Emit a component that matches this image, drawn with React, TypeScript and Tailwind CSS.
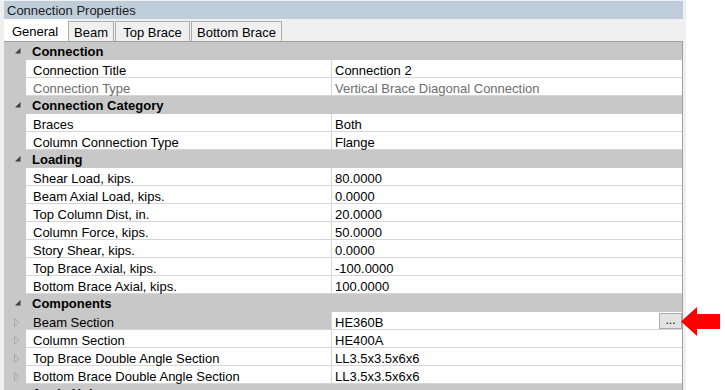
import React from "react";

type Row =
  | { kind: "header"; label: string }
  | { kind: "prop"; name: string; value: string; muted?: boolean; expandable?: boolean; selected?: boolean; button?: boolean };

const rows: Row[] = [
  { kind: "header", label: "Connection" },
  { kind: "prop", name: "Connection Title", value: "Connection 2" },
  { kind: "prop", name: "Connection Type", value: "Vertical Brace Diagonal Connection", muted: true },
  { kind: "header", label: "Connection Category" },
  { kind: "prop", name: "Braces", value: "Both" },
  { kind: "prop", name: "Column Connection Type", value: "Flange" },
  { kind: "header", label: "Loading" },
  { kind: "prop", name: "Shear Load, kips.", value: "80.0000" },
  { kind: "prop", name: "Beam Axial Load, kips.", value: "0.0000" },
  { kind: "prop", name: "Top Column Dist, in.", value: "20.0000" },
  { kind: "prop", name: "Column Force, kips.", value: "50.0000" },
  { kind: "prop", name: "Story Shear, kips.", value: "0.0000" },
  { kind: "prop", name: "Top Brace Axial, kips.", value: "-100.0000" },
  { kind: "prop", name: "Bottom Brace Axial, kips.", value: "100.0000" },
  { kind: "header", label: "Components" },
  { kind: "prop", name: "Beam Section", value: "HE360B", expandable: true, selected: true, button: true },
  { kind: "prop", name: "Column Section", value: "HE400A", expandable: true },
  { kind: "prop", name: "Top Brace Double Angle Section", value: "LL3.5x3.5x6x6", expandable: true },
  { kind: "prop", name: "Bottom Brace Double Angle Section", value: "LL3.5x3.5x6x6", expandable: true },
  { kind: "header", label: "Angle Holes" },
];

function ExpandedGlyph() {
  return (
    <svg width="6" height="6" viewBox="0 0 6 6" className="block">
      <polygon points="5.5,0 5.5,5.5 0,5.5" fill="#3f3f3f" />
    </svg>
  );
}

function CollapsedGlyph() {
  return (
    <svg width="6" height="9" viewBox="0 0 6 9" className="block">
      <polygon points="0.5,0.5 5,4.5 0.5,8.5" fill="none" stroke="#a8a8a8" strokeWidth="1" />
    </svg>
  );
}

function GridRow({ row }: { row: Row }) {
  if (row.kind === "header") {
    return (
      <div className="flex h-[18px] shrink-0 items-center bg-[#c8c8c8]">
        {/* gutter glyph */}
        <div className="flex w-[22px] justify-start pl-[11px]">
          <ExpandedGlyph />
        </div>
        <div className="pl-[6px] font-bold text-black">{row.label}</div>
      </div>
    );
  }
  return (
    <div className="flex h-[18px] shrink-0">
      <div className="flex w-[22px] items-center bg-[#c8c8c8] pl-[10px] pt-[2px]">
        {row.expandable && <CollapsedGlyph />}
      </div>
      <div
        className={`flex w-[306px] items-center border-b border-r border-[#d6d6d6] pl-[7px] pt-[4px] ${
          row.selected ? "bg-[#c8c8c8]" : "bg-white"
        } ${row.muted ? "text-[#6d6d6d]" : "text-black"}`}
      >
        {row.name}
      </div>
      <div
        className={`relative flex flex-1 items-center border-b border-[#d6d6d6] bg-white pl-[3px] pt-[4px] ${
          row.muted ? "text-[#6d6d6d]" : "text-black"
        }`}
      >
        {row.value}
        {row.button && (
          <div className="absolute right-0 top-[1px] flex h-[16px] w-[23px] items-center justify-center border border-[#adadad] bg-[#e3e3e3] pb-[2px] text-[12px] leading-none">
            ...
          </div>
        )}
      </div>
    </div>
  );
}

export default function App() {
  return (
    <div className="relative flex h-[390px] w-[725px] overflow-hidden bg-white font-['Liberation_Sans',Arial,sans-serif] text-[13px] leading-none">
      {/* panel */}
      <div className="flex h-full w-[686px] flex-col bg-[#f0f0f0] pl-[4px] pr-[3px] pt-[1px]">
        {/* title */}
        <div className="flex h-[18px] shrink-0 items-center bg-[#bfcddb] pl-[3px] text-[#1b1b1b]">
          Connection Properties
        </div>
        {/* tabs */}
        <div className="flex h-[22px] shrink-0 items-end">
          <div className="flex h-[22px] w-[64px] items-center justify-center bg-white pr-[2px] pt-[2px] text-black">
            General
          </div>
          <div className="flex h-[20px] w-[46px] items-center justify-center border border-b-0 border-[#acacac] bg-[#f0f0f0] pt-[2px] text-black">
            Beam
          </div>
          <div className="ml-[1px] flex h-[20px] w-[75px] items-center justify-center border border-b-0 border-[#acacac] bg-[#f0f0f0] pt-[2px] text-black">
            Top Brace
          </div>
          <div className="ml-[1px] flex h-[20px] w-[91px] items-center justify-center border border-b-0 border-[#acacac] bg-[#f0f0f0] pt-[2px] text-black">
            Bottom Brace
          </div>
        </div>
        {/* property grid */}
        <div className="flex flex-1 flex-col overflow-hidden border-r border-t border-[#a0a0a0]">
          {rows.map((r, i) => (
            <GridRow key={i} row={r} />
          ))}
        </div>
      </div>
      {/* red arrow callout */}
      <svg className="absolute left-[681px] top-[307px]" width="40" height="29" viewBox="0 0 40 29">
        <polygon points="0,14.5 16,0 16,7 39,7 39,22 16,22 16,29" fill="#ff0000" />
      </svg>
    </div>
  );
}
